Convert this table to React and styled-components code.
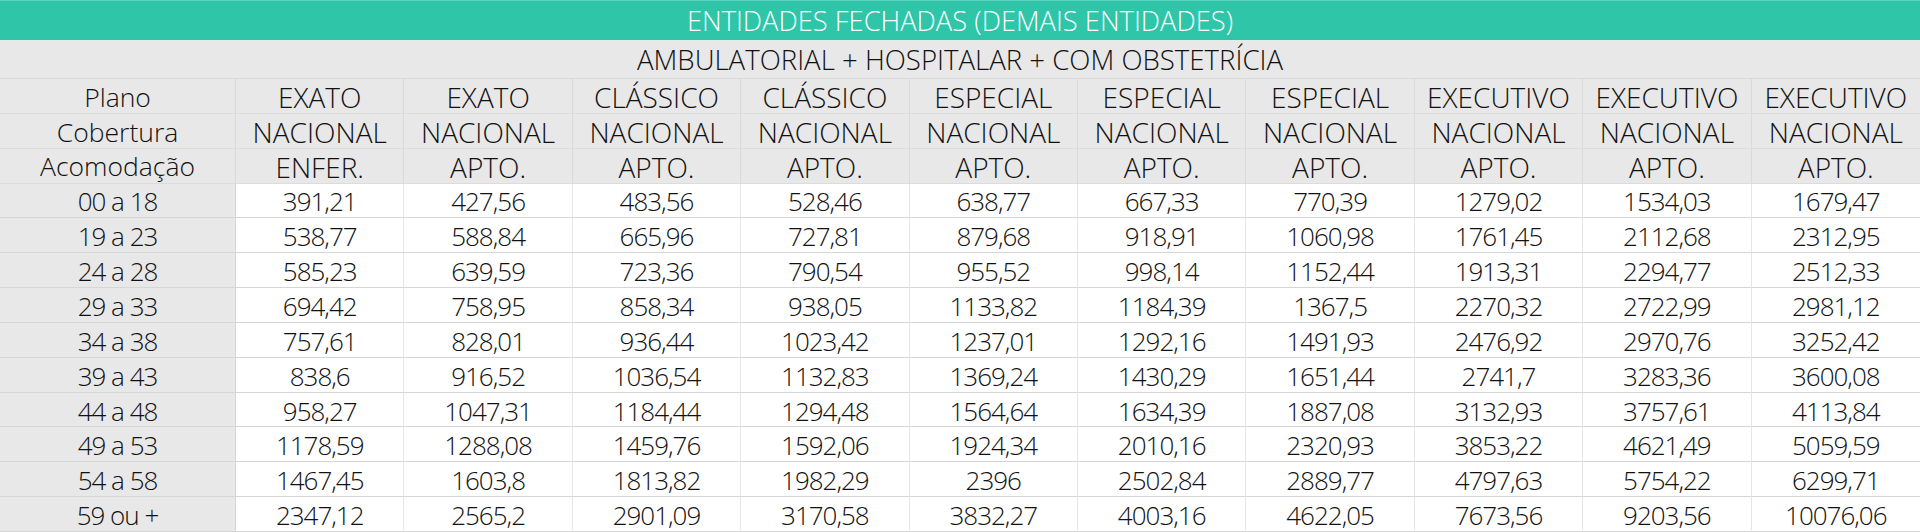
import React from "react";
import styled, { createGlobalStyle } from "styled-components";

const Global = createGlobalStyle`
  html, body { margin: 0; padding: 0; background: #ffffff; }
  body { font-family: "Open Sans", "Noto Sans", sans-serif; }
`;

const Sheet = styled.div`
  width: 1920px;
  height: 532px;
  overflow: hidden;
  display: flex;
  flex-direction: column;
  font-family: "Open Sans", "Noto Sans", sans-serif;
  font-weight: 300;
  color: #111;
`;

const TitleBar = styled.div`
  flex: 0 0 40px;
  background: #2ec5a8;
  border-top: 1px solid #5fd3bd;
  box-sizing: border-box;
  color: #ffffff;
  display: flex;
  align-items: center;
  justify-content: center;
  font-size: 27.3px;
  line-height: 1;
`;

const SubBar = styled.div`
  flex: 0 0 39px;
  background: #e8e8e8;
  border-bottom: 1px solid #d8d8d8;
  box-sizing: border-box;
  display: flex;
  align-items: center;
  justify-content: center;
  font-size: 27.6px;
  line-height: 1;
  padding-top: 2px;
`;

const Grid = styled.div`
  flex: 1 1 auto;
  display: grid;
  grid-template-columns: 236px repeat(10, 1fr);
  grid-template-rows: repeat(13, 1fr);
`;

const sizes = {
  caps: "font-size: 28px; letter-spacing: 0;",
  label: "font-size: 26.5px; letter-spacing: 0;",
  num: "font-size: 26px; letter-spacing: -1px;",
};

const Cell = styled.div`
  display: flex;
  align-items: center;
  justify-content: center;
  box-sizing: border-box;
  padding-top: 2px;
  line-height: 1;
  white-space: nowrap;
  ${(p) => sizes[p.$kind]}
  background: ${(p) => (p.$shade ? "#e8e8e8" : "#ffffff")};
  border-bottom: 1px solid ${(p) => (p.$head ? "#dcdcdc" : "#d6d6d6")};
  border-right: 1px solid ${(p) => (p.$head ? "#dadada" : p.$first ? "#d6d6d6" : "#e6e6e6")};
  &:nth-child(11n) { border-right: none; }
`;

const plans = [
  ["EXATO", "NACIONAL", "ENFER."],
  ["EXATO", "NACIONAL", "APTO."],
  ["CLÁSSICO", "NACIONAL", "APTO."],
  ["CLÁSSICO", "NACIONAL", "APTO."],
  ["ESPECIAL", "NACIONAL", "APTO."],
  ["ESPECIAL", "NACIONAL", "APTO."],
  ["ESPECIAL", "NACIONAL", "APTO."],
  ["EXECUTIVO", "NACIONAL", "APTO."],
  ["EXECUTIVO", "NACIONAL", "APTO."],
  ["EXECUTIVO", "NACIONAL", "APTO."],
];

const headLabels = ["Plano", "Cobertura", "Acomodação"];

const rows = [
  ["00 a 18", "391,21", "427,56", "483,56", "528,46", "638,77", "667,33", "770,39", "1279,02", "1534,03", "1679,47"],
  ["19 a 23", "538,77", "588,84", "665,96", "727,81", "879,68", "918,91", "1060,98", "1761,45", "2112,68", "2312,95"],
  ["24 a 28", "585,23", "639,59", "723,36", "790,54", "955,52", "998,14", "1152,44", "1913,31", "2294,77", "2512,33"],
  ["29 a 33", "694,42", "758,95", "858,34", "938,05", "1133,82", "1184,39", "1367,5", "2270,32", "2722,99", "2981,12"],
  ["34 a 38", "757,61", "828,01", "936,44", "1023,42", "1237,01", "1292,16", "1491,93", "2476,92", "2970,76", "3252,42"],
  ["39 a 43", "838,6", "916,52", "1036,54", "1132,83", "1369,24", "1430,29", "1651,44", "2741,7", "3283,36", "3600,08"],
  ["44 a 48", "958,27", "1047,31", "1184,44", "1294,48", "1564,64", "1634,39", "1887,08", "3132,93", "3757,61", "4113,84"],
  ["49 a 53", "1178,59", "1288,08", "1459,76", "1592,06", "1924,34", "2010,16", "2320,93", "3853,22", "4621,49", "5059,59"],
  ["54 a 58", "1467,45", "1603,8", "1813,82", "1982,29", "2396", "2502,84", "2889,77", "4797,63", "5754,22", "6299,71"],
  ["59 ou +", "2347,12", "2565,2", "2901,09", "3170,58", "3832,27", "4003,16", "4622,05", "7673,56", "9203,56", "10076,06"],
];

export default function App() {
  return (
    <Sheet>
      <Global />
      <TitleBar>ENTIDADES FECHADAS (DEMAIS ENTIDADES)</TitleBar>
      <SubBar>AMBULATORIAL + HOSPITALAR + COM OBSTETRÍCIA</SubBar>
      <Grid>
        {headLabels.map((label, r) => (
          <React.Fragment key={label}>
            <Cell $shade $head $kind="label">{label}</Cell>
            {plans.map((p, i) => (
              <Cell key={i} $shade $head $kind="caps">{p[r]}</Cell>
            ))}
          </React.Fragment>
        ))}
        {rows.map((row) => (
          <React.Fragment key={row[0]}>
            {row.map((v, i) => (
              <Cell key={i} $shade={i === 0} $first={i === 0} $kind="num">{v}</Cell>
            ))}
          </React.Fragment>
        ))}
      </Grid>
    </Sheet>
  );
}
